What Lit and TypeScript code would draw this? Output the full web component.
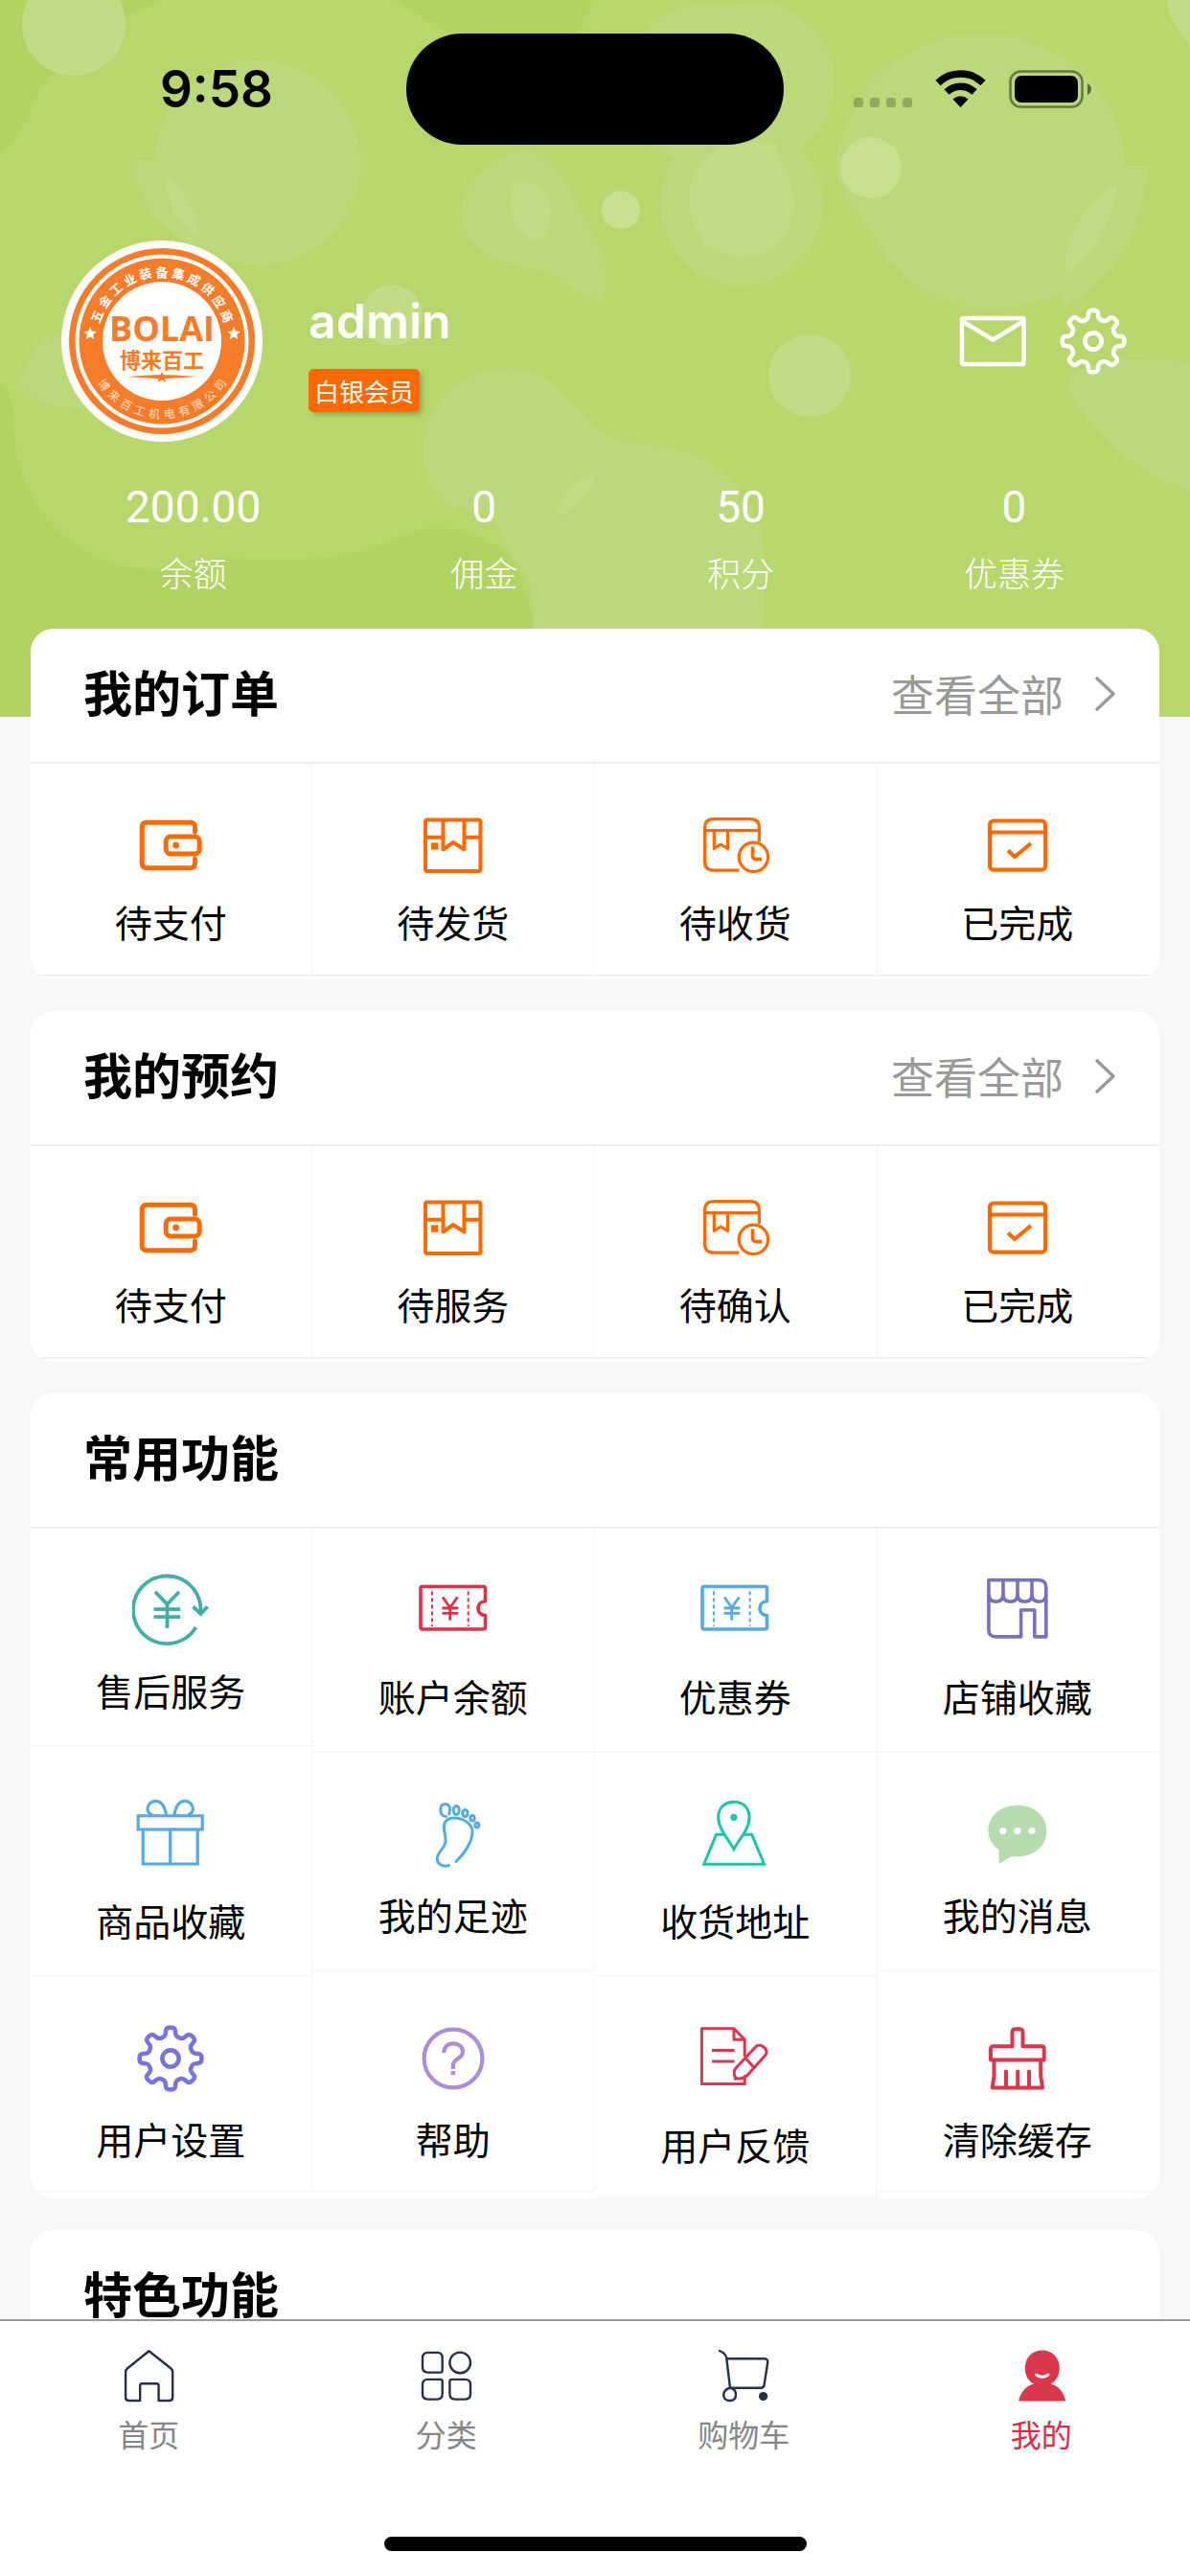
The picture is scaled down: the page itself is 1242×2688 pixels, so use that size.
import { LitElement, html, svg, css, type TemplateResult, type SVGTemplateResult } from "lit";
import { customElement, property } from "lit/decorators.js";
import { classMap } from "lit/directives/class-map.js";

type Art = SVGTemplateResult;

/* ---------- gear outline, shared by the header and the settings entry ---------- */

function gearPath(): string {
  const spin = (x: number, y: number, a: number) => {
    const px = x * Math.cos(a) - y * Math.sin(a) + 40;
    const py = x * Math.sin(a) + y * Math.cos(a) + 40;
    return `${px.toFixed(2)} ${py.toFixed(2)}`;
  };
  const tooth: number[][][] = [
    [[-6.2, -22.4], [-5.6, -23.6], [-5.2, -26.5]],
    [[-4.9, -31.5], [-4.2, -32.4], [0, -32.4]],
    [[4.2, -32.4], [4.9, -31.5], [5.2, -26.5]],
    [[5.6, -23.6], [6.2, -22.4], [9, -21.8]],
  ];
  let d = `M${spin(-9, -21.8, 0)}`;
  for (let k = 0; k < 8; k++) {
    const a = (k * Math.PI) / 4;
    for (const seg of tooth) {
      d += ` C${seg.map(([x, y]) => spin(x, y, a)).join(" ")}`;
    }
  }
  return d + "Z";
}

const GEAR = gearPath();

const gear = (sw: number): Art => svg`
  <path d=${GEAR} fill="none" stroke="currentColor" stroke-width=${sw} stroke-linejoin="round"/>
  <circle cx="40" cy="40" r="8.6" fill="none" stroke="currentColor" stroke-width=${sw}/>`;

/* ---------- 80 x 80 icons of the order and function grids ---------- */

const ticket = svg`
  <g fill="none" stroke="currentColor" stroke-width="3.6" stroke-linejoin="round">
    <path d="M73.5 31V17.5Q73.5 15.5 71.5 15.5H8Q6 15.5 6 17.5V58Q6 60 8 60H71.5Q73.5 60 73.5 58V45.5C63.5 45.5 63.5 31 73.5 31Z" />
    <path d="M18 20.5V57M55.7 20.5V57" stroke-width="2" stroke-dasharray="4 3"/>
    <path d="M29 26.5L36.7 37.5L44.5 26.5M36.7 37V50.7M28.5 38H45.3M28.5 43.3H45.3" stroke-width="2.8"/>
  </g>`;

const ICONS: Record<string, Art> = {
  wallet: svg`
    <g fill="none" stroke="currentColor" stroke-width="5" stroke-linecap="round">
      <path d="M65.5 26V21.5Q65.5 16.3 60.5 16.3H15.5Q10.2 16.3 10.2 21.5V58.5Q10.2 63.7 15.5 63.7H60.5Q65.5 63.7 65.5 58.5V54"/>
      <rect x="35.2" y="31" width="35" height="18" rx="5"/>
    </g>
    <circle cx="45.6" cy="40" r="3.4" fill="currentColor"/>`,
  parcel: svg`
    <g fill="none" stroke="currentColor" stroke-width="4" stroke-linejoin="round">
      <rect x="11" y="13.4" width="57.4" height="53.6" rx="2"/>
      <path d="M11 31.8H29.5M51.5 31.8H68.4"/>
      <path d="M29.5 13.4V44.5L40 37L51.5 44.5V13.4"/>
    </g>
    <rect x="17" y="37.3" width="7.4" height="7.4" fill="currentColor"/>`,
  parcelClock: svg`
    <g fill="none" stroke="currentColor" stroke-width="3.2" stroke-linejoin="round">
      <path d="M65.4 36V22Q65.4 12.6 56 12.6H18Q8.6 12.6 8.6 22V57Q8.6 66.2 18 66.2H44.5"/>
      <path d="M8.6 24.7H65.4M18.3 24.7V43.5L25.3 39L32.5 43.5V24.7"/>
      <circle cx="59.4" cy="52.3" r="15.2"/>
      <path d="M58.6 41.5V51Q58.6 54.6 62 54.6H68" stroke-width="3.6"/>
    </g>`,
  done: svg`
    <g fill="none" stroke="currentColor" stroke-width="4.2" stroke-linejoin="round">
      <rect x="11" y="14.5" width="58" height="51.2" rx="4"/>
      <path d="M11 26.5H69"/>
      <path d="M30 45.5L37 52L54 38"/>
    </g>`,
  refund: svg`
    <g fill="none" stroke="currentColor" stroke-width="3.8">
      <path d="M66.5 58A35.3 35.3 0 1 1 71.3 44"/>
      <path d="M63.5 36.5L71.6 44L78.6 36.5" stroke-linejoin="miter"/>
      <path d="M24 21L36.5 34L49 21M36.5 33V59M22.5 39.2H50.2M22.5 47.2H50.2"/>
    </g>`,
  ticket,
  shop: svg`
    <g fill="none" stroke="currentColor" stroke-width="3.6" stroke-linejoin="round">
      <path d="M9.9 8.7H62Q69.8 8.7 69.8 16.5V67.9H57.8V40H43.6V67.9H17.5Q9.9 67.9 9.9 60.5Z"/>
      <path d="M25 8.7V24M40 8.7V24M55 8.7V24"/>
      <path d="M9.9 24Q10.5 31.2 17.4 31.2Q25 31.2 25 23.5Q25 31.2 32.5 31.2Q40 31.2 40 23.5Q40 31.2 47.5 31.2Q55 31.2 55 23.5Q55 31.2 62.4 31.2Q69.4 31.2 69.8 24"/>
    </g>`,
  gift: svg`
    <g fill="none" stroke="currentColor" stroke-width="3.2">
      <rect x="6.2" y="20.8" width="67" height="14.2"/>
      <path d="M11.2 35V71H68.2V35M39.7 35V71"/>
      <path d="M35.6 20C34 11 30 5.3 24.5 5.3C19 5.3 16 10 16 14Q16.5 18 21 20"/>
      <path d="M43.8 20C45.4 11 49.4 5.3 54.9 5.3C60.4 5.3 63.4 10 63.4 14Q62.9 18 58.4 20"/>
    </g>`,
  foot: svg`
    <g fill="none" stroke="currentColor" stroke-width="3" stroke-linecap="round" stroke-linejoin="round">
      <path d="M43 68.5C53 59 60 47 60 37C60 30 52 23 41 23C34 23 30 27 30.3 33C30.8 39 32.8 44 31.8 49C30 56 23.2 59 23.2 65.5C23.5 70.5 28 75 35.5 72.5"/>
      <path d="M32.5 21.5C28.5 21.5 26.5 18 26.8 14C27 10 29 8.4 31.5 8.4C35 8.4 36.8 11 36.6 15L35.8 19"/>
      <ellipse cx="43.3" cy="15" rx="3" ry="4.4"/>
      <ellipse cx="52.4" cy="18" rx="2.7" ry="3.5"/>
      <ellipse cx="60" cy="23.3" rx="2.2" ry="2.8"/>
      <ellipse cx="64.8" cy="30.5" rx="2" ry="2.4"/>
    </g>`,
  pin: svg`
    <g fill="none" stroke="currentColor" stroke-width="3">
      <path d="M38.9 55.5C34 46 22.7 35 22.7 22.5C22.7 12 29.5 6.3 38.9 6.3C48.3 6.3 55.1 12 55.1 22.5C55.1 35 43.8 46 38.9 55.5Z"/>
      <path d="M29.5 40.2H20.5L7.8 71.2H70.6L57.6 40.2H48.5"/>
    </g>
    <circle cx="38.9" cy="22.3" r="3.6" fill="currentColor"/>`,
  chat: svg`
    <path d="M20.6 71V56.5Q9.4 48.5 9.4 36.3C9.4 21 22 9.7 39.9 9.7S70.4 21 70.4 36.3S58 63.3 39.9 63.3H33.5Z" fill="currentColor"/>
    <g fill="#fff"><circle cx="24.8" cy="36.5" r="3.6"/><circle cx="39.9" cy="36.5" r="3.6"/><circle cx="54.9" cy="36.5" r="3.6"/></g>`,
  gear: gear(4.6),
  help: svg`
    <g fill="none" stroke="currentColor" stroke-width="4.2">
      <circle cx="40" cy="40" r="30.4"/>
      <path d="M30.4 34C30.4 27.5 34.5 24.3 40 24.3C46 24.3 50 28 50 33C50 40.5 39.9 40 39.9 47V51"/>
    </g>
    <rect x="37.6" y="53" width="4.6" height="4.2" fill="currentColor"/>`,
  feedback: svg`
    <g fill="none" stroke="currentColor" stroke-width="3" stroke-linejoin="round">
      <path d="M50.2 38V20.2L39 8.7H5.4V66.5H50.2V57.5"/>
      <path d="M39 8.7V20.2H50.2M16 31.6H39.5M16 43H39.5"/>
      <path d="M62 27.4C66 23.5 75 29.5 72.3 36L53 57.5Q47 62.5 40.8 60.5Q37.5 54 41 50Z"/>
      <path d="M51 39.5L59.5 49M39.5 62.3L42 59.5"/>
    </g>`,
  brush: svg`
    <g fill="none" stroke="currentColor" stroke-width="4" stroke-linejoin="round" stroke-linecap="round">
      <path d="M34.5 27.2V13Q34.5 9.3 38 9.3H42Q45.5 9.3 45.5 13V27.2H65Q67.7 27.2 67.7 30V41.5H12V30Q12 27.2 14.8 27.2Z"/>
      <path d="M15.5 41.5V58L13.7 70.6H66L64.2 58V41.5M28 53.5V70M40.2 53.5V70M52 53.5V70"/>
    </g>`,
};

/* ---------- tab bar icons, 56 x 56 ---------- */

const TAB_ICONS: Record<string, Art> = {
  home: svg`
    <path d="M28.5 2.3L51.5 20.5Q53.2 22 53.2 24.5V50.5Q53.2 54 49.7 54H38.6V38.5Q38.6 36.3 36.4 36.3H21.4Q19.2 36.3 19.2 38.5V54H7.6Q4.1 54 4.1 50.5V24.5Q4.1 22 5.8 20.5Z" fill="none" stroke="currentColor" stroke-width="2.4" stroke-linejoin="round"/>`,
  grid: svg`
    <g fill="none" stroke="currentColor" stroke-width="2.4">
      <path d="M8.5 3.9H18.5Q23.7 3.9 23.7 9.5V22.5Q23.7 24.6 21.6 24.6H8.5Q3 24.6 3 19V9.5Q3 3.9 8.5 3.9Z"/>
      <circle cx="42.2" cy="14.4" r="10.8"/>
      <path d="M8.5 31.9H21.6Q23.7 31.9 23.7 34V47Q23.7 52.6 18.2 52.6H8.5Q3 52.6 3 47V37.5Q3 31.9 8.5 31.9Z"/>
      <path d="M33.5 31.9H47.5Q53 31.9 53 37.5V47Q53 52.6 47.5 52.6H37Q31.4 52.6 31.4 47V34Q31.4 31.9 33.5 31.9Z"/>
    </g>`,
  cart: svg`
    <g fill="none" stroke="currentColor" stroke-width="2.4" stroke-linecap="round" stroke-linejoin="round">
      <path d="M3 2Q9 4.5 10.2 9L14 40.8Q8 42 7.2 48Q7.5 54 13.5 54Q20 54 20 48Q20 42 14 40.8H46Q49 40.8 49.5 38L53.2 14.5Q53.6 10.2 50 10.2H10.3"/>
    </g>
    <circle cx="48.6" cy="49.5" r="4.6" fill="currentColor"/>`,
  person: svg`
    <path d="M28.8 1.5C39.5 1.5 46.8 9.5 46.8 20C46.8 27.5 43 34 37.5 36.5C45.5 38.5 51.5 45 53.2 54.5H4.2C6 45 12 38.5 20.2 36.5C14.5 34 10.8 27.5 10.8 20C10.8 9.5 18 1.5 28.8 1.5Z" fill="currentColor"/>
    <path d="M22.5 27Q28.8 31.5 35 27" fill="none" stroke="#fff" stroke-width="2.8" stroke-linecap="round"/>`,
};

/* ---------- seal shown as the member's avatar ---------- */

function arcText(text: string, from: number, to: number, r: number, size: number, flip: boolean): Art[] {
  const chars = [...text];
  return chars.map((ch, i) => {
    const deg = from + ((to - from) * i) / (chars.length - 1);
    return svg`<text transform="rotate(${deg}) translate(0 ${flip ? r : -r})" font-size=${size}
      text-anchor="middle" dominant-baseline="central">${ch}</text>`;
  });
}

const STAR = "M0-7L1.9-2.4L6.8-2L3.1 1.2L4.2 6L0 3.4L-4.2 6L-3.1 1.2L-6.8-2L-1.9-2.4Z";

const seal = svg`
  <circle r="97" fill="#f67c29"/>
  <circle r="88.5" fill="none" stroke="#fff" stroke-width="4"/>
  <circle r="62" fill="#fff"/>
  <g class="ring">${arcText("五金工业装备集成供应商", -69, 69, 73, 13, false)}</g>
  <g class="ring soft">${arcText("博来百工机电有限公司", 53, -53, 75, 12, true)}</g>
  <path d=${STAR} fill="#fff" transform="translate(-75 -8)"/>
  <path d=${STAR} fill="#fff" transform="translate(75 -8)"/>
  <text class="latin" y="0" text-anchor="middle">BOLAI</text>
  <text class="han" y="28" text-anchor="middle">博来百工</text>
  <path d="M-36 37Q-10 35 0 35T36 37Q10 39 0 39T-36 37Z" fill="#f67c29"/>
  <path d="M0 32L2 36L4.500 43L0 40.500L-4.500 43L-2 36Z" fill="#f67c29"/>`;

/* ---------- data ---------- */

interface Entry {
  icon: string;
  label: string;
  color?: string;
  tall?: boolean;
}

const ORANGE = "#ff6a00";

const ORDERS: Entry[] = [
  { icon: "wallet", label: "待支付", color: ORANGE },
  { icon: "parcel", label: "待发货", color: ORANGE },
  { icon: "parcelClock", label: "待收货", color: ORANGE },
  { icon: "done", label: "已完成", color: ORANGE },
];

const BOOKINGS: Entry[] = [
  { icon: "wallet", label: "待支付", color: ORANGE },
  { icon: "parcel", label: "待服务", color: ORANGE },
  { icon: "parcelClock", label: "待确认", color: ORANGE },
  { icon: "done", label: "已完成", color: ORANGE },
];

const FUNCTIONS: Entry[] = [
  { icon: "refund", label: "售后服务", color: "#41afa5" },
  { icon: "ticket", label: "账户余额", color: "#de3148", tall: true },
  { icon: "ticket", label: "优惠券", color: "#54abe4", tall: true },
  { icon: "shop", label: "店铺收藏", color: "#7871bb", tall: true },
  { icon: "gift", label: "商品收藏", color: "#54abe4", tall: true },
  { icon: "foot", label: "我的足迹", color: "#54abe4" },
  { icon: "pin", label: "收货地址", color: "#1cc5a8", tall: true },
  { icon: "chat", label: "我的消息", color: "#b5dbaf" },
  { icon: "gear", label: "用户设置", color: "#7774de" },
  { icon: "help", label: "帮助", color: "#ab8dd8" },
  { icon: "feedback", label: "用户反馈", color: "#dc364c", tall: true },
  { icon: "brush", label: "清除缓存", color: "#dc364c" },
];

const STATS = [
  { value: "200.00", label: "余额" },
  { value: "0", label: "佣金" },
  { value: "50", label: "积分" },
  { value: "0", label: "优惠券" },
];

const TABS = [
  { icon: "home", label: "首页" },
  { icon: "grid", label: "分类" },
  { icon: "cart", label: "购物车" },
  { icon: "person", label: "我的", active: true },
];

/* ---------- card with a title row and a four-column grid ---------- */

@customElement("menu-card")
export class MenuCard extends LitElement {
  @property() heading = "";
  @property({ type: Boolean }) more = false;
  @property({ type: Boolean }) roomy = false;
  @property({ attribute: false }) entries: Entry[] = [];

  static styles = css`
    :host {
      display: block;
      background: #fff;
      border-radius: 24px;
      overflow: hidden;
    }
    .head {
      display: flex;
      align-items: center;
      justify-content: space-between;
      height: 139px;
      padding: 0 44px 0 55px;
      border-bottom: 2px solid #eeeeec;
    }
    .title {
      margin: 0;
      padding-bottom: 10px;
      font-size: 51px;
      line-height: 64px;
      font-weight: 700;
      color: #000;
    }
    .more {
      display: flex;
      align-items: center;
      gap: 32px;
      padding-bottom: 3px;
      font-size: 45px;
      line-height: 60px;
      color: #999;
      text-decoration: none;
    }
    .chevron {
      width: 24px;
      height: 40px;
    }
    .grid {
      display: grid;
      grid-template-columns: repeat(4, 1fr);
      margin: 0;
      padding: 0 0 3px;
      list-style: none;
    }
    .roomy {
      padding: 0;
    }
    .cell {
      box-sizing: border-box;
      border-right: 2px solid #f8f8f8;
      border-bottom: 2px solid #eeeeec;
    }
    .cell:nth-child(4n) {
      border-right-color: transparent;
    }
    .roomy .cell {
      align-self: start;
      border-bottom-color: #f8f8f8;
    }
    .link {
      display: flex;
      flex-direction: column;
      align-items: center;
      gap: 19px;
      padding: 45px 0 36px;
      font-size: 39px;
      line-height: 40px;
      color: #000;
      text-decoration: none;
    }
    .roomy .link {
      gap: 23px;
      padding: 45px 0 38px;
    }
    .roomy .tall .link {
      gap: 29px;
    }
    .roomy .cell:nth-last-child(-n + 4) .link {
      padding-bottom: 35px;
    }
    .icon {
      width: 80px;
      height: 80px;
    }
  `;

  render(): TemplateResult {
    return html`
      <div class="head">
        <h2 class="title">${this.heading}</h2>
        ${this.more
          ? html`<a class="more" href="#all">
              <span>查看全部</span>
              <svg class="chevron" viewBox="0 0 24 40" fill="none" stroke="#999" stroke-width="3.4" aria-hidden="true">
                <path d="M2 3L20 20L2 37" stroke-linejoin="round" />
              </svg>
            </a>`
          : null}
      </div>
      <ul class=${classMap({ grid: true, roomy: this.roomy })}>
        ${this.entries.map(
          (e) => html`<li class=${classMap({ cell: true, tall: !!e.tall })}>
            <a class="link" href="#${e.icon}">
              <svg class="icon" viewBox="0 0 80 80" style="color:${e.color}" aria-hidden="true">${ICONS[e.icon]}</svg>
              <span>${e.label}</span>
            </a>
          </li>`
        )}
      </ul>
    `;
  }
}

/* ---------- page ---------- */

@customElement("app-root")
export class AppRoot extends LitElement {
  static styles = css`
    :host {
      display: flex;
      flex-direction: column;
      height: 100vh;
      background: #f7f7f7;
      font-family: "Noto Sans CJK SC", sans-serif;
      overflow: hidden;
    }
    .scroll {
      flex: 1;
      min-height: 0;
      overflow: hidden;
    }
    .hero {
      position: relative;
      padding: 35px 0 129px;
      color: #fff;
    }
    .bokeh {
      position: absolute;
      inset: 0;
      width: 100%;
      height: 100%;
    }
    .status,
    .profile,
    .stats {
      position: relative;
    }
    .status {
      display: grid;
      grid-template-columns: 1fr 394px 1fr;
      align-items: center;
      color: #000;
    }
    .time {
      padding-left: 28px;
      text-align: center;
      font: 600 53px/60px Inter, "Liberation Sans", sans-serif;
    }
    .island {
      height: 116px;
      border-radius: 58px;
      background: #000;
    }
    .signals {
      display: flex;
      justify-content: center;
      gap: 24px;
      padding-right: 30px;
    }
    .signals svg {
      height: 42px;
    }
    .profile {
      display: flex;
      align-items: flex-start;
      margin-top: 100px;
      padding: 0 66px 0 64px;
    }
    .avatar {
      width: 210px;
      height: 210px;
      border-radius: 50%;
      background: #fff;
    }
    .ring {
      fill: #fff;
      font-family: "Noto Sans CJK SC", sans-serif;
      font-weight: 700;
    }
    .soft {
      fill: #fde0c8;
      font-weight: 400;
    }
    .latin {
      fill: #f67c29;
      font: 700 36px "Open Sans", "Noto Sans", sans-serif;
    }
    .han {
      fill: #f67c29;
      font: 700 22px "Noto Sans CJK SC", sans-serif;
    }
    .who {
      display: flex;
      flex: 1;
      flex-direction: column;
      align-items: flex-start;
      gap: 20px;
      padding: 54px 0 0 48px;
    }
    .name {
      margin: 0;
      font: 600 50px/60px Inter, "Liberation Sans", sans-serif;
    }
    .badge {
      padding: 0 6px;
      border-radius: 5px;
      background: #ff6a00;
      box-shadow: 3px 3px 4px rgba(0, 0, 0, 0.2);
      font-size: 26px;
      line-height: 45px;
    }
    .tools {
      display: flex;
      align-self: center;
      gap: 35px;
    }
    .tool {
      width: 70px;
      height: 70px;
      padding: 0;
      border: 0;
      background: none;
      color: #fff;
    }
    .tool svg {
      display: block;
      width: 70px;
      height: 70px;
    }
    .stats {
      display: flex;
      justify-content: space-around;
      margin: 38px 32px 0;
    }
    .stat {
      display: flex;
      flex-direction: column;
      align-items: center;
      gap: 16px;
    }
    .value {
      font: 400 46px/60px Roboto, "Liberation Sans", sans-serif;
    }
    .label {
      font-size: 35px;
      line-height: 44px;
      font-weight: 300;
    }
    .cards {
      position: relative;
      display: flex;
      flex-direction: column;
      gap: 33px;
      margin: -92px 32px 0;
    }
    .tabs {
      box-sizing: border-box;
      border-top: 2px solid #9b9b9b;
      background: #fff;
    }
    .row {
      display: grid;
      grid-template-columns: repeat(4, 1fr);
    }
    .tab {
      display: flex;
      flex-direction: column;
      align-items: center;
      gap: 12px;
      padding-top: 29px;
      font-size: 32px;
      line-height: 40px;
      color: #85868a;
      text-decoration: none;
    }
    .tab svg {
      width: 56px;
      height: 56px;
      color: #27304a;
    }
    .active {
      color: #dc2a48;
    }
    .active svg {
      color: #d9384d;
    }
    .grabber {
      width: 441px;
      height: 15px;
      margin: 88px auto 26px;
      border-radius: 8px;
      background: #000;
    }
  `;

  private bokeh(): TemplateResult {
    return html`<svg class="bokeh" viewBox="0 0 1242 748" preserveAspectRatio="none" aria-hidden="true">
      <rect width="1242" height="748" fill="#b1d362" />
      <path
        fill="#b7d76d"
        d="M0 160C45 130 10 70 170 0H410C440 15 470 35 500 60H595L620 0H1242V748H570C560 660 550 600 530 580C510 560 470 546 440 552C400 565 380 585 280 585L225 582C190 600 160 596 150 594C60 585 14 510 14 440C14 415 10 405 0 400Z"
      />
      <g fill="#bbd97a">
        <circle cx="269" cy="170" r="107" />
        <path d="M140 167H200L230 262C180 262 138 210 140 167Z" />
        <circle cx="787" cy="86" r="84" />
        <circle cx="737" cy="88" r="84" />
        <circle cx="774" cy="213" r="85" />
        <path d="M481 220C482 190 515 165 550 153C580 165 600 205 618 240C633 270 635 290 630 312C600 312 590 290 565 282C515 278 481 255 481 220Z" />
        <path d="M1024 36C1110 36 1173 100 1174 173H1197C1198 240 1160 290 1112 321L1105 306C1080 318 1055 322 1024 322C960 318 925 270 905 235C880 205 862 175 880 140C900 75 960 36 1024 36Z" />
        <path d="M1113 400C1130 375 1160 371 1242 378V512C1180 495 1130 440 1113 400Z" />
        <path d="M442 475C442 420 480 385 532 385C570 385 590 410 610 435C635 462 660 462 690 466C760 475 800 530 798 600L793 748H570C560 690 560 640 550 600C520 570 530 550 500 535C462 530 442 510 442 475Z" />
        <path d="M21 400C30 370 45 350 70 345L110 425C80 425 40 430 21 400Z" />
      </g>
      <g fill="#c1dc84">
        <circle cx="77" cy="25" r="54" />
        <circle cx="1293" cy="-10" r="76" />
        <path d="M173 184C190 195 205 220 208 245C190 240 172 215 173 184Z" />
        <path d="M536 192C555 183 577 200 575 225C572 250 560 254 550 248C535 238 530 212 536 192Z" />
        <path d="M741 160L757 148L810 150L811 165C835 195 835 235 808 257C780 275 745 268 730 245C713 220 715 180 741 160Z" />
        <circle cx="409" cy="329" r="32" />
        <circle cx="845" cy="392" r="43" />
        <path d="M1166 193C1160 235 1140 270 1113 286C1106 260 1130 210 1166 193Z" />
        <path d="M583 538C580 520 602 495 619 497C624 508 600 532 583 538Z" />
      </g>
      <g fill="#c7df8e">
        <circle cx="648" cy="219" r="20" />
        <circle cx="909" cy="175" r="32" />
      </g>
    </svg>`;
  }

  render(): TemplateResult {
    return html`
      <main class="scroll">
        <header class="hero">
          ${this.bokeh()}
          <div class="status">
            <span class="time">9:58</span>
            <span class="island"></span>
            <span class="signals">
              <svg width="61" viewBox="0 0 61 42" fill="#000" fill-opacity="0.22" aria-hidden="true">
                <rect x="0" y="30" width="10" height="10" rx="3" />
                <rect x="17" y="30" width="10" height="10" rx="3" />
                <rect x="34" y="30" width="10" height="10" rx="3" />
                <rect x="51" y="30" width="10" height="10" rx="3" />
              </svg>
              <svg width="53" viewBox="0 0 53 42" aria-hidden="true">
                <path d="M3 14.500A34 34 0 0 1 50 14.500" fill="none" stroke="#000" stroke-width="7.500" />
                <path d="M12 24A21 21 0 0 1 41 24" fill="none" stroke="#000" stroke-width="7.500" />
                <path d="M26.500 40L18.500 31.500Q26.500 25 34.500 31.500Z" />
              </svg>
              <svg width="86" viewBox="0 0 86 42" aria-hidden="true">
                <rect x="1.500" y="2.500" width="75" height="37" rx="11" fill="none" stroke="#000" stroke-opacity="0.45" stroke-width="2.500" />
                <rect x="6" y="7" width="66" height="28" rx="7" />
                <path d="M82 15Q86 17 86 21T82 27Z" fill-opacity="0.5" />
              </svg>
            </span>
          </div>
          <div class="profile">
            <svg class="avatar" viewBox="-105 -105 210 210" role="img" aria-label="BOLAI">${seal}</svg>
            <div class="who">
              <h1 class="name">admin</h1>
              <span class="badge">白银会员</span>
            </div>
            <div class="tools">
              <button class="tool" type="button" aria-label="消息">
                <svg viewBox="0 0 70 70" fill="none" stroke="currentColor" stroke-width="4.500" stroke-linejoin="round">
                  <rect x="3" y="11" width="64.500" height="48" rx="1.500" />
                  <path d="M3 14L35.500 33.500L67.500 14" stroke-linejoin="miter" />
                </svg>
              </button>
              <button class="tool" type="button" aria-label="设置">
                <svg viewBox="5 5 70 70">${gear(4.6)}</svg>
              </button>
            </div>
          </div>
          <div class="stats">
            ${STATS.map(
              (s) => html`<div class="stat">
                <span class="value">${s.value}</span>
                <span class="label">${s.label}</span>
              </div>`
            )}
          </div>
        </header>
        <div class="cards">
          <menu-card heading="我的订单" more .entries=${ORDERS}></menu-card>
          <menu-card heading="我的预约" more .entries=${BOOKINGS}></menu-card>
          <menu-card heading="常用功能" roomy .entries=${FUNCTIONS}></menu-card>
          <menu-card heading="特色功能"></menu-card>
        </div>
      </main>
      <nav class="tabs">
        <div class="row">
          ${TABS.map(
            (t) => html`<a class=${classMap({ tab: true, active: !!t.active })} href="#${t.icon}">
              <svg viewBox="0 0 56 56" aria-hidden="true">${TAB_ICONS[t.icon]}</svg>
              <span>${t.label}</span>
            </a>`
          )}
        </div>
        <div class="grabber"></div>
      </nav>
    `;
  }
}
